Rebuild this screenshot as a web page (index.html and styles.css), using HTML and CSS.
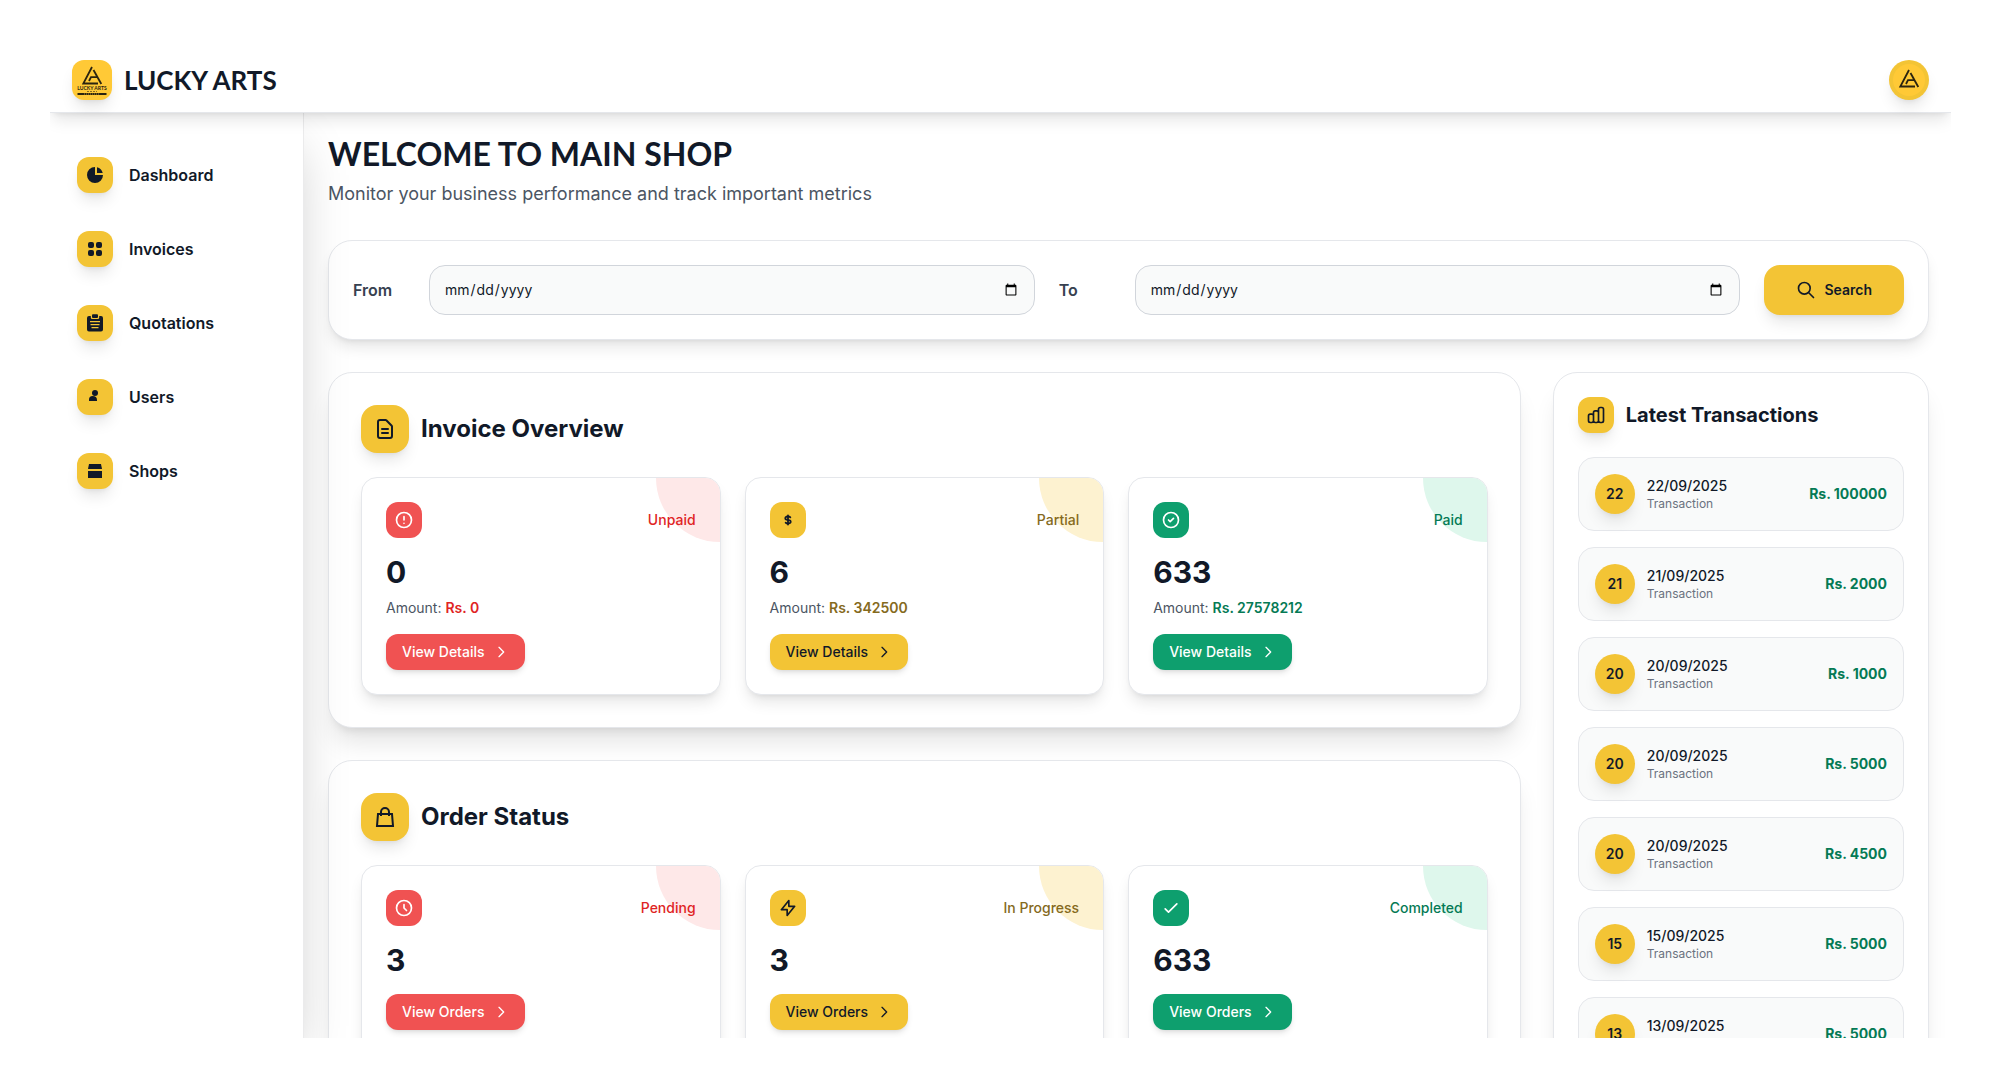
FILE: index.html
```html
<!DOCTYPE html>
<html lang="en">
<head>
  <meta charset="UTF-8">
  <meta name="viewport" content="width=device-width, initial-scale=1.0">
  <title>Lucky Arts</title>
  <link rel="stylesheet" href="styles.css">
</head>
<body>
  <!-- Shared icons -->
  <svg class="sprite" aria-hidden="true">
    <symbol id="chevron" viewBox="0 0 24 24"><path d="M9 5l7 7-7 7"/></symbol>
    <symbol id="mark" viewBox="0 0 22 20">
      <path d="M17 18.500H2.300L11 2"/>
      <path d="M12.500 5L20.300 19"/>
      <path d="M8 16L10 12.200H16.500"/>
    </symbol>
  </svg>

  <div class="app">
    <header class="topbar">
      <a class="brand" href="#">
        <svg class="logo" viewBox="0 0 40 40" aria-hidden="true">
          <use href="#mark" class="mark" x="9" y="5" width="22" height="20"/>
          <text x="20" y="30" class="logo-name">LUCKY ARTS</text>
          <path class="logo-dots" d="M15 31.500h10"/>
          <path class="logo-bar" d="M5.500 34h29"/>
          <path class="logo-strip" d="M12 34h15"/>
        </svg>
        <span class="brand-name">LUCKY ARTS</span>
      </a>
      <button class="avatar" type="button" aria-label="Account">
        <svg class="avatar-img" viewBox="0 0 32 32" aria-hidden="true">
          <use href="#mark" class="mark" x="5" y="4" width="22" height="20"/>
        </svg>
      </button>
    </header>

    <div class="body">
      <nav class="sidebar">
        <a class="nav-link" href="#">
          <span class="tile tile-yellow raised"><svg class="icon solid" viewBox="0 0 20 20"><path d="M2 10a8 8 0 018-8v8h8a8 8 0 11-16 0z"/><path d="M12 2.252A8.014 8.014 0 0117.748 8H12V2.252z"/></svg></span>
          Dashboard
        </a>
        <a class="nav-link" href="#">
          <span class="tile tile-yellow raised"><svg class="icon solid" viewBox="0 0 20 20"><rect x="3" y="3" width="6" height="6" rx="2"/><rect x="11" y="3" width="6" height="6" rx="2"/><rect x="3" y="11" width="6" height="6" rx="2"/><rect x="11" y="11" width="6" height="6" rx="2"/></svg></span>
          Invoices
        </a>
        <a class="nav-link" href="#">
          <span class="tile tile-yellow raised"><svg class="icon solid" viewBox="0 0 20 20"><rect x="7" y="1.300" width="6" height="3.700" rx="1"/><path fill-rule="evenodd" d="M4 3h1.800v1.500a1.500 1.500 0 001.500 1.500h5.400a1.500 1.500 0 001.500-1.500V3H16a2 2 0 012 2v11.500a2 2 0 01-2 2H4a2 2 0 01-2-2V5a2 2 0 012-2zM5 8v1.200h10V8zM5.500 11v1.200h9V11zM6.500 14v1.200h7V14z"/></svg></span>
          Quotations
        </a>
        <a class="nav-link" href="#">
          <span class="tile tile-yellow raised"><svg class="icon solid" viewBox="0 0 20 20"><circle cx="10" cy="6" r="3"/><path d="M4 14v-1.500a3.500 3.500 0 013.500-3.500q4.500 0 4.500 4v1z"/></svg></span>
          Users
        </a>
        <a class="nav-link" href="#">
          <span class="tile tile-yellow raised"><svg class="icon solid" viewBox="0 0 20 20"><path d="M4 3h12l1 5H3z"/><path d="M3 10h14v7H3z"/></svg></span>
          Shops
        </a>
      </nav>

      <main class="main">
        <h1 class="page-title">WELCOME TO MAIN SHOP</h1>
        <p class="page-sub">Monitor your business performance and track important metrics</p>

        <form class="filter">
          <div class="field">
            <label for="from">From</label>
            <input type="date" id="from">
          </div>
          <div class="field">
            <label for="to">To</label>
            <input type="date" id="to">
          </div>
          <button class="search" type="button">
            <svg class="icon" viewBox="0 0 24 24"><path d="M21 21l-6-6m2-5a7 7 0 11-14 0 7 7 0 0114 0z"/></svg>
            Search
          </button>
        </form>

        <div class="columns">
          <div class="overview">
            <section class="panel">
              <div class="panel-head">
                <span class="tile tile-lg tile-yellow raised"><svg class="icon icon-lg" viewBox="0 0 24 24"><path d="M9 12h6m-6 4h6m2 5H7a2 2 0 01-2-2V5a2 2 0 012-2h5.586a1 1 0 01.707.293l5.414 5.414a1 1 0 01.293.707V19a2 2 0 01-2 2z"/></svg></span>
                <h2>Invoice Overview</h2>
              </div>
              <div class="stats">
                <article class="stat red">
                  <div class="stat-top">
                    <span class="tile"><svg class="icon" viewBox="0 0 24 24"><path d="M12 8v4m0 4h.01M21 12a9 9 0 11-18 0 9 9 0 0118 0z"/></svg></span>
                    <span class="stat-label">Unpaid</span>
                  </div>
                  <div class="stat-value">0</div>
                  <p class="stat-amount">Amount: <strong>Rs. 0</strong></p>
                  <a class="btn" href="#">View Details <svg class="chevron"><use href="#chevron"/></svg></a>
                </article>
                <article class="stat yellow">
                  <div class="stat-top">
                    <span class="tile"><svg class="icon icon-sm solid" viewBox="0 0 20 20"><path fill-rule="evenodd" d="M11 5a1 1 0 10-2 0v.092a4.535 4.535 0 00-1.676.662C6.602 6.234 6 7.009 6 8c0 .99.602 1.765 1.324 2.246.48.32 1.054.545 1.676.662v1.941c-.391-.127-.68-.317-.843-.504a1 1 0 10-1.510 1.310c.562.649 1.413 1.076 2.353 1.253V15a1 1 0 102 0v-.092a4.535 4.535 0 001.676-.662C13.398 13.766 14 12.991 14 12c0-.99-.602-1.765-1.324-2.246A4.535 4.535 0 0011 9.092V7.151c.391.127.68.317.843.504a1 1 0 101.511-1.310c-.563-.649-1.413-1.076-2.354-1.253V5zM8.433 7.418c.155-.103.346-.196.567-.267v1.698a2.305 2.305 0 01-.567-.267C8.070 8.340 8 8.114 8 8c0-.114.070-.340.433-.582zM11 12.849v-1.698c.220.071.412.164.567.267.364.243.433.468.433.582 0 .114-.070.340-.433.582a2.305 2.305 0 01-.567.267z"/></svg></span>
                    <span class="stat-label">Partial</span>
                  </div>
                  <div class="stat-value">6</div>
                  <p class="stat-amount">Amount: <strong>Rs. 342500</strong></p>
                  <a class="btn" href="#">View Details <svg class="chevron"><use href="#chevron"/></svg></a>
                </article>
                <article class="stat green">
                  <div class="stat-top">
                    <span class="tile"><svg class="icon" viewBox="0 0 24 24"><path d="M9 12l2 2 4-4m6 2a9 9 0 11-18 0 9 9 0 0118 0z"/></svg></span>
                    <span class="stat-label">Paid</span>
                  </div>
                  <div class="stat-value">633</div>
                  <p class="stat-amount">Amount: <strong>Rs. 27578212</strong></p>
                  <a class="btn" href="#">View Details <svg class="chevron"><use href="#chevron"/></svg></a>
                </article>
              </div>
            </section>

            <section class="panel">
              <div class="panel-head">
                <span class="tile tile-lg tile-yellow raised"><svg class="icon icon-lg miter" viewBox="0 0 24 24"><path d="M16 11V7a4 4 0 00-8 0v4M5 9h14l1 12H4L5 9z"/></svg></span>
                <h2>Order Status</h2>
              </div>
              <div class="stats">
                <article class="stat red">
                  <div class="stat-top">
                    <span class="tile"><svg class="icon" viewBox="0 0 24 24"><path d="M12 8v4l3 3m6-3a9 9 0 11-18 0 9 9 0 0118 0z"/></svg></span>
                    <span class="stat-label">Pending</span>
                  </div>
                  <div class="stat-value">3</div>
                  <a class="btn" href="#">View Orders <svg class="chevron"><use href="#chevron"/></svg></a>
                </article>
                <article class="stat yellow">
                  <div class="stat-top">
                    <span class="tile"><svg class="icon" viewBox="0 0 24 24"><path d="M13 10V3L4 14h7v7l9-11h-7z"/></svg></span>
                    <span class="stat-label">In Progress</span>
                  </div>
                  <div class="stat-value">3</div>
                  <a class="btn" href="#">View Orders <svg class="chevron"><use href="#chevron"/></svg></a>
                </article>
                <article class="stat green">
                  <div class="stat-top">
                    <span class="tile"><svg class="icon" viewBox="0 0 24 24"><path d="M5 13l4 4L19 7"/></svg></span>
                    <span class="stat-label">Completed</span>
                  </div>
                  <div class="stat-value">633</div>
                  <a class="btn" href="#">View Orders <svg class="chevron"><use href="#chevron"/></svg></a>
                </article>
              </div>
            </section>
          </div>

          <aside class="panel panel-side">
            <div class="panel-head">
              <span class="tile tile-yellow raised"><svg class="icon" viewBox="0 0 24 24"><path d="M9 19v-6a2 2 0 00-2-2H5a2 2 0 00-2 2v6a2 2 0 002 2h2a2 2 0 002-2zm0 0V9a2 2 0 012-2h2a2 2 0 012 2v10m-6 0a2 2 0 002 2h2a2 2 0 002-2m0 0V5a2 2 0 012-2h2a2 2 0 012 2v14a2 2 0 01-2 2h-2a2 2 0 01-2-2z"/></svg></span>
              <h3>Latest Transactions</h3>
            </div>
            <ul class="transactions">
              <li><span class="day raised">22</span><div class="when"><b>22/09/2025</b><small>Transaction</small></div><span class="sum">Rs. 100000</span></li>
              <li><span class="day raised">21</span><div class="when"><b>21/09/2025</b><small>Transaction</small></div><span class="sum">Rs. 2000</span></li>
              <li><span class="day raised">20</span><div class="when"><b>20/09/2025</b><small>Transaction</small></div><span class="sum">Rs. 1000</span></li>
              <li><span class="day raised">20</span><div class="when"><b>20/09/2025</b><small>Transaction</small></div><span class="sum">Rs. 5000</span></li>
              <li><span class="day raised">20</span><div class="when"><b>20/09/2025</b><small>Transaction</small></div><span class="sum">Rs. 4500</span></li>
              <li><span class="day raised">15</span><div class="when"><b>15/09/2025</b><small>Transaction</small></div><span class="sum">Rs. 5000</span></li>
              <li><span class="day raised">13</span><div class="when"><b>13/09/2025</b><small>Transaction</small></div><span class="sum">Rs. 5000</span></li>
            </ul>
          </aside>
        </div>
      </main>
    </div>
  </div>
</body>
</html>
```
FILE: styles.css
```css
:root {
  --yellow: #f3c435;
  --red: #f05252;
  --green: #0e9f6e;
  --ink: #111928;
  --border: #e5e7eb;
  --soft: #f9fafa;
  --shadow-md: 0 4px 6px -1px rgb(0 0 0 / 0.1), 0 2px 4px -2px rgb(0 0 0 / 0.1);
  --shadow-lg: 0 10px 15px -3px rgb(0 0 0 / 0.1), 0 4px 6px -4px rgb(0 0 0 / 0.1);
  --shadow-xl: 0 20px 25px -5px rgb(0 0 0 / 0.1), 0 8px 10px -6px rgb(0 0 0 / 0.1);
  --shadow-2xl: 0 25px 50px -12px rgb(0 0 0 / 0.25);
}

* {
  box-sizing: border-box;
}

body {
  margin: 0;
  padding: 50px;
  height: 100vh;
  background: #fff;
  color: var(--ink);
  font-family: Inter, "Liberation Sans", sans-serif;
  font-size: 14px;
  line-height: 20px;
}

h1, h2, h3, p, ul {
  margin: 0;
  padding: 0;
}

a {
  color: inherit;
  text-decoration: none;
}

.sprite {
  position: absolute;
  width: 0;
  height: 0;
}

.app {
  display: flex;
  flex-direction: column;
  height: 100%;
  overflow: hidden;
}

/* Header */
.topbar {
  position: relative;
  z-index: 2;
  display: flex;
  flex: none;
  align-items: center;
  justify-content: space-between;
  padding: 10px 22px 12px;
  background: #fff;
  border-bottom: 1px solid var(--border);
  box-shadow: var(--shadow-lg);
}
.brand {
  display: flex;
  align-items: center;
  gap: 12px;
}
.logo {
  width: 40px;
  height: 40px;
  border-radius: 12px;
  background: #ffc936;
  box-shadow: var(--shadow-lg);
}
.mark {
  fill: none;
  stroke: #2b2410;
  stroke-width: 1.8;
}
.logo-name {
  fill: #2b2410;
  font: 700 5px Lato, sans-serif;
  text-anchor: middle;
}
.logo-dots {
  stroke: #8a6d20;
  stroke-width: 1;
  stroke-dasharray: 2 1;
}
.logo-bar {
  stroke: #2b2410;
  stroke-width: 2;
}
.logo-strip {
  stroke: #b88f25;
  stroke-width: 1;
  stroke-dasharray: 1 1;
}
.brand-name {
  font-family: Lato, "Open Sans", sans-serif;
  font-size: 26px;
  font-weight: 700;
  line-height: 32px;
}
.avatar {
  width: 40px;
  height: 40px;
  padding: 4px;
  border: 0;
  border-radius: 50%;
  background: var(--yellow);
  box-shadow: var(--shadow-lg);
}
.avatar-img {
  display: block;
  width: 32px;
  height: 32px;
  border-radius: 50%;
  background: #ffc936;
}

.body {
  display: flex;
  flex: 1;
  min-height: 0;
}

/* Sidebar */
.sidebar {
  position: relative;
  z-index: 1;
  display: flex;
  flex: none;
  flex-direction: column;
  gap: 6px;
  width: 254px;
  padding: 28px 27px;
  background: #fff;
  border-right: 1px solid #ebebec;
  box-shadow: var(--shadow-2xl);
}
.nav-link {
  display: flex;
  align-items: center;
  gap: 16px;
  padding: 16px 0;
  font-size: 16px;
  font-weight: 600;
}

/* Icon tiles */
.tile {
  display: flex;
  flex: none;
  align-items: center;
  justify-content: center;
  width: 36px;
  height: 36px;
  border-radius: 12px;
}
.tile-lg {
  width: 48px;
  height: 48px;
  border-radius: 16px;
}
.tile-yellow {
  background: var(--yellow);
}
.raised {
  box-shadow: var(--shadow-lg);
}
.icon {
  width: 20px;
  height: 20px;
  fill: none;
  stroke: currentColor;
  stroke-width: 2;
  stroke-linecap: round;
  stroke-linejoin: round;
}
.icon-sm {
  width: 18px;
  height: 18px;
}
.icon-lg {
  width: 24px;
  height: 24px;
}
.miter {
  stroke-linecap: butt;
  stroke-linejoin: miter;
}
.solid {
  fill: currentColor;
  stroke: none;
}

/* Main */
.main {
  flex: 1;
  min-width: 0;
  padding: 23px 22px 24px 24px;
}
.page-title {
  margin-bottom: 8px;
  font-family: Lato, "Open Sans", sans-serif;
  font-size: 32px;
  font-weight: 700;
  line-height: 36px;
}
.page-sub {
  margin-bottom: 32px;
  color: #4b5563;
  font-size: 18px;
  line-height: 28px;
}

.filter {
  display: flex;
  gap: 24px;
  margin-bottom: 32px;
  padding: 24px;
  background: #fff;
  border: 1px solid var(--border);
  border-radius: 24px;
  box-shadow: var(--shadow-lg);
}
.field {
  display: flex;
  flex: 1;
  align-items: center;
  gap: 16px;
}
.field label {
  width: 60px;
  color: #374151;
  font-size: 16px;
  font-weight: 600;
}
.field input {
  flex: 1;
  min-width: 0;
  height: 50px;
  padding: 0 14px;
  background: var(--soft);
  border: 1px solid #d1d5db;
  border-radius: 16px;
  color: var(--ink);
  font: inherit;
}
.search {
  display: flex;
  align-items: center;
  gap: 8px;
  height: 50px;
  padding: 0 32px;
  border: 0;
  border-radius: 16px;
  background: var(--yellow);
  box-shadow: var(--shadow-lg);
  color: var(--ink);
  font: inherit;
  font-weight: 600;
}

.columns {
  display: grid;
  grid-template-columns: repeat(4, 1fr);
  gap: 32px;
}
.overview {
  display: flex;
  flex-direction: column;
  grid-column: span 3;
  gap: 32px;
}
.panel {
  padding: 32px;
  background: #fff;
  border: 1px solid var(--border);
  border-radius: 24px;
  box-shadow: var(--shadow-xl);
}
.panel-side {
  padding: 24px;
}
.panel-head {
  display: flex;
  align-items: center;
  gap: 12px;
  margin-bottom: 24px;
}
.panel-head h2 {
  font-size: 24px;
  line-height: 32px;
}
.panel-head h3 {
  font-size: 20px;
  line-height: 28px;
}

/* Stat cards */
.stats {
  display: grid;
  grid-template-columns: repeat(3, 1fr);
  gap: 24px;
}
.stat {
  position: relative;
  overflow: hidden;
  padding: 24px;
  background: #fff;
  border: 1px solid var(--border);
  border-radius: 16px;
  box-shadow: var(--shadow-lg);
}
/* tinted quarter circle in the corner */
.stat::before {
  content: "";
  position: absolute;
  top: 0;
  right: 0;
  width: 64px;
  height: 64px;
  border-bottom-left-radius: 64px;
  background: var(--tint);
}
.red {
  --fill: var(--red);
  --tint: #fee8e8;
  --text: #e02424;
  --on-fill: #fff;
}
.yellow {
  --fill: var(--yellow);
  --tint: #fdf2d0;
  --text: #856a1d;
  --on-fill: var(--ink);
}
.green {
  --fill: var(--green);
  --tint: #def7ec;
  --text: #057a55;
  --on-fill: #fff;
}
.stat-top {
  position: relative;
  display: flex;
  align-items: center;
  justify-content: space-between;
  margin-bottom: 16px;
}
.stat-top .tile,
.btn {
  background: var(--fill);
  color: var(--on-fill);
}
.stat-label {
  color: var(--text);
  font-weight: 500;
}
.stat-value {
  font-size: 30px;
  font-weight: 700;
  line-height: 36px;
}
.stat-amount {
  margin-top: 8px;
  color: #4b5563;
}
.stat-amount strong {
  color: var(--text);
  font-weight: 600;
}
.btn {
  display: inline-flex;
  align-items: center;
  gap: 8px;
  height: 36px;
  margin-top: 16px;
  padding: 0 16px;
  border-radius: 12px;
  box-shadow: var(--shadow-md);
  font-weight: 500;
  vertical-align: top;
}
.chevron {
  width: 16px;
  height: 16px;
  fill: none;
  stroke: currentColor;
  stroke-width: 2;
  stroke-linecap: round;
  stroke-linejoin: round;
}

/* Transactions */
.transactions {
  display: flex;
  flex-direction: column;
  gap: 16px;
  list-style: none;
}
.transactions li {
  display: flex;
  align-items: center;
  gap: 12px;
  padding: 16px;
  background: var(--soft);
  border: 1px solid var(--border);
  border-radius: 16px;
}
.day {
  display: flex;
  align-items: center;
  justify-content: center;
  width: 40px;
  height: 40px;
  border-radius: 50%;
  background: var(--yellow);
  font-weight: 600;
}
.when {
  display: flex;
  flex: 1;
  flex-direction: column;
}
.when b {
  font-weight: 500;
}
.when small {
  color: #6b7280;
  font-size: 12px;
  line-height: 16px;
}
.sum {
  color: #057a55;
  font-weight: 700;
}
```
